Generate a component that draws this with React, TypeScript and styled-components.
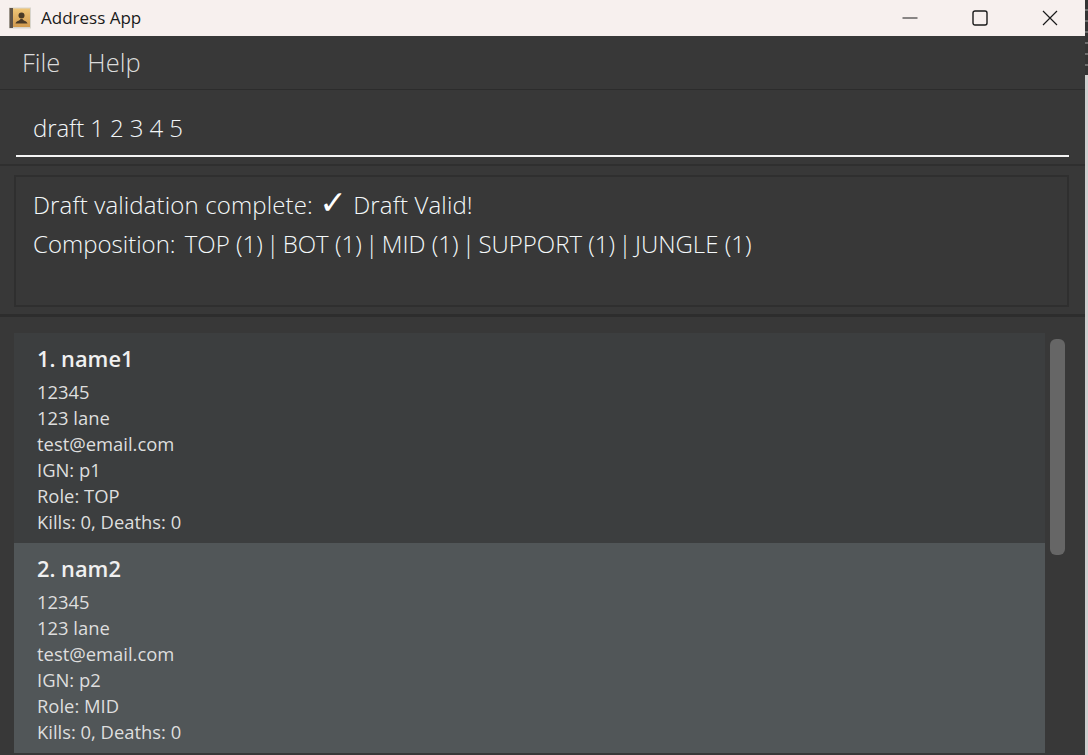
import React from "react";
import styled, { createGlobalStyle } from "styled-components";

const Global = createGlobalStyle`
  html, body { margin: 0; padding: 0; background: #383838; }
  body { width: 1088px; height: 755px; overflow: hidden; font-family: "Open Sans", "Liberation Sans", sans-serif; }
`;

const Frame = styled.div`
  width: 1088px;
  height: 755px;
  display: flex;
  overflow: hidden;
  background: #e8e8e8;
`;

const Window = styled.div`
  width: 1085px;
  height: 755px;
  display: flex;
  flex-direction: column;
  background: #383838;
`;

const Edge = styled.div`
  width: 3px;
  background: #cfcfcf;
`;

const EdgeStripes = styled.div`
  height: 75px;
  background: repeating-linear-gradient(#343434 0 9px, #6e6e6e 9px 11px);
`;

const TitleBar = styled.header`
  height: 36px;
  flex: none;
  background: #f7f0ee;
  display: flex;
  align-items: center;
  padding-left: 9px;
  color: #1a1a1a;
`;

const TitleText = styled.span`
  margin-left: 10px;
  font-size: 17px;
  line-height: 28px;
`;

const WindowButtons = styled.div`
  margin-left: auto;
  display: flex;
  height: 100%;
`;

const WindowButton = styled.div`
  width: 70px;
  display: flex;
  align-items: center;
  justify-content: center;
  color: #1a1a1a;
`;

const MenuBar = styled.nav`
  height: 54px;
  flex: none;
  box-sizing: border-box;
  border-bottom: 1px solid #2c2c2c;
  display: flex;
  align-items: center;
  gap: 27px;
  padding: 0 0 1px 22px;
`;

const MenuItem = styled.span`
  font-size: 25.5px;
  font-weight: 300;
  color: #dcdcdc;
`;

const CommandBar = styled.section`
  height: 76px;
  flex: none;
  box-sizing: border-box;
  border-bottom: 2px solid #2f2f2f;
  padding: 0 16px;
`;

const CommandField = styled.div`
  height: 67px;
  box-sizing: border-box;
  border-bottom: 2px solid #f4f4f4;
  padding: 19px 0 0 17px;
  font-size: 24px;
  font-weight: 300;
  letter-spacing: -0.1px;
  line-height: 38px;
  color: #f2f6f8;
`;

const ResultSection = styled.section`
  height: 151px;
  flex: none;
  box-sizing: border-box;
  border-bottom: 3px solid #2d2d2d;
  padding: 9px 16px 7px 14px;
`;

const ResultBox = styled.div`
  height: 100%;
  box-sizing: border-box;
  border: 2px solid #2f2f2f;
  padding: 8px 0 0 17px;
  font-size: 24px;
  font-weight: 300;
  line-height: 40px;
  color: #f4f8fa;
`;

const ResultLine = styled.div`
  white-space: pre;
`;

const StatusLine = styled(ResultLine)`
  letter-spacing: 0.13px;
  line-height: 39px;
`;

const Check = styled.span`
  font-family: "DejaVu Sans", sans-serif;
  font-size: 33px;
  font-weight: 700;
  line-height: 0;
  letter-spacing: 0;
  color: #fff;
`;

const Roles = styled.span`
  margin-left: 3px;
`;

const Separator = styled.span`
  margin: 0 3.5px;
`;

const ListArea = styled.section`
  flex: 1;
  min-height: 0;
  display: flex;
  padding: 16px 0 0 14px;
  overflow: hidden;
`;

const List = styled.div`
  width: 1031px;
  flex: none;
`;

const Card = styled.article<{ $selected?: boolean }>`
  height: 210px;
  box-sizing: border-box;
  padding: 10px 0 0 23px;
  background: ${(p) => (p.$selected ? "#515658" : "#3c3e3f")};
`;

const CardName = styled.h2`
  margin: 0 0 4px;
  font-size: 21.8px;
  line-height: 32px;
  font-weight: 600;
  color: #f0f0f0;
`;

const CardLine = styled.div`
  font-size: 18.4px;
  line-height: 26px;
  font-weight: 400;
  color: #dedede;
`;

const Track = styled.div`
  flex: 1;
  display: flex;
  padding: 6px 0 0 5px;
`;

const Thumb = styled.div`
  width: 15px;
  height: 216px;
  border-radius: 6px;
  background: #666666;
`;

const AppIcon = () => (
  <svg width="22" height="22" viewBox="0 0 22 22" aria-hidden="true">
    <defs>
      <linearGradient id="cover" x1="0" y1="0" x2="0" y2="1">
        <stop offset="0" stopColor="#f0c677" />
        <stop offset="1" stopColor="#d19a4e" />
      </linearGradient>
    </defs>
    <rect x="0" y="0.5" width="22" height="21" fill="#d8d4cc" />
    <rect x="0.5" y="1" width="3.5" height="20" fill="#5f5347" />
    <rect x="4" y="1.5" width="17" height="18.5" fill="url(#cover)" />
    <circle cx="12.5" cy="8.5" r="3" fill="#4a3a26" />
    <path d="M6.5 16.5 C7 14 10.5 14 11.5 12 h2 C14.5 14 18 14 18.5 16.5 Z" fill="#4a3a26" />
  </svg>
);

const MinIcon = () => (
  <svg width="16" height="16" viewBox="0 0 16 16" aria-hidden="true">
    <path d="M0.5 8h15" stroke="currentColor" strokeWidth="1" fill="none" />
  </svg>
);
const MaxIcon = () => (
  <svg width="16" height="16" viewBox="0 0 16 16" aria-hidden="true">
    <rect x="1" y="1" width="14" height="14" rx="2" stroke="currentColor" strokeWidth="1.4" fill="none" />
  </svg>
);
const CloseIcon = () => (
  <svg width="16" height="16" viewBox="0 0 16 16" aria-hidden="true">
    <path d="M1 1l14 14M15 1L1 15" stroke="currentColor" strokeWidth="1.2" fill="none" />
  </svg>
);

const players = [
  { name: "1. name1", ign: "p1", role: "TOP" },
  { name: "2. nam2", ign: "p2", role: "MID", selected: true },
];

const composition = ["TOP", "BOT", "MID", "SUPPORT", "JUNGLE"];

export default function App() {
  return (
    <Frame>
      <Global />
      <Window>
        <TitleBar>
          <AppIcon />
          <TitleText>Address App</TitleText>
          <WindowButtons>
            <WindowButton><MinIcon /></WindowButton>
            <WindowButton><MaxIcon /></WindowButton>
            <WindowButton><CloseIcon /></WindowButton>
          </WindowButtons>
        </TitleBar>
        <MenuBar>
          <MenuItem>File</MenuItem>
          <MenuItem>Help</MenuItem>
        </MenuBar>
        <CommandBar>
          <CommandField>draft 1 2 3 4 5</CommandField>
        </CommandBar>
        <ResultSection>
          <ResultBox>
            <StatusLine>Draft validation complete: <Check>✓</Check> Draft Valid!</StatusLine>
            <ResultLine>
              Composition: <Roles>
                {composition.map((role, i) => (
                  <React.Fragment key={role}>
                    {i > 0 && <Separator>|</Separator>}
                    {role} (1)
                  </React.Fragment>
                ))}
              </Roles>
            </ResultLine>
          </ResultBox>
        </ResultSection>
        <ListArea>
          <List>
            {players.map((p) => (
              <Card key={p.name} $selected={p.selected}>
                <CardName>{p.name}</CardName>
                <CardLine>12345</CardLine>
                <CardLine>123 lane</CardLine>
                <CardLine>test@email.com</CardLine>
                <CardLine>IGN: {p.ign}</CardLine>
                <CardLine>Role: {p.role}</CardLine>
                <CardLine>Kills: 0, Deaths: 0</CardLine>
              </Card>
            ))}
          </List>
          <Track><Thumb /></Track>
        </ListArea>
      </Window>
      <Edge><EdgeStripes /></Edge>
    </Frame>
  );
}
